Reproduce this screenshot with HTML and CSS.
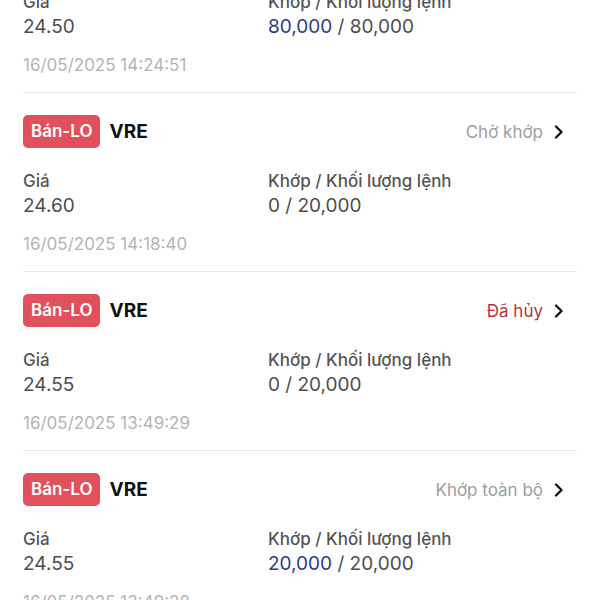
FILE: index.html
```html
<!DOCTYPE html>
<html>
<head>
    <link rel="stylesheet" href="styles.css">
</head>
<body>
    <div class="order-list">

        <div class="order">
            <div class="order-head">
                <span class="badge">Bán-LO</span>
                <span class="symbol">VRE</span>
                <span class="status">Khớp toàn bộ</span>
                <svg class="chevron" viewBox="0 0 10 14"><path d="M2 1.5 L7.5 7 L2 12.5"/></svg>
            </div>
            <div class="order-body">
                <div class="field">
                    <div class="label">Giá</div>
                    <div class="value">24.50</div>
                </div>
                <div class="field">
                    <div class="label">Khớp / Khối lượng lệnh</div>
                    <div class="value"><span class="matched">80,000</span> / 80,000</div>
                </div>
            </div>
            <div class="time">16/05/2025 14:24:51</div>
        </div>

        <div class="order">
            <div class="order-head">
                <span class="badge">Bán-LO</span>
                <span class="symbol">VRE</span>
                <span class="status">Chờ khớp</span>
                <svg class="chevron" viewBox="0 0 10 14"><path d="M2 1.5 L7.5 7 L2 12.5"/></svg>
            </div>
            <div class="order-body">
                <div class="field">
                    <div class="label">Giá</div>
                    <div class="value">24.60</div>
                </div>
                <div class="field">
                    <div class="label">Khớp / Khối lượng lệnh</div>
                    <div class="value">0 / 20,000</div>
                </div>
            </div>
            <div class="time">16/05/2025 14:18:40</div>
        </div>

        <div class="order">
            <div class="order-head">
                <span class="badge">Bán-LO</span>
                <span class="symbol">VRE</span>
                <span class="status cancelled">Đã hủy</span>
                <svg class="chevron" viewBox="0 0 10 14"><path d="M2 1.5 L7.5 7 L2 12.5"/></svg>
            </div>
            <div class="order-body">
                <div class="field">
                    <div class="label">Giá</div>
                    <div class="value">24.55</div>
                </div>
                <div class="field">
                    <div class="label">Khớp / Khối lượng lệnh</div>
                    <div class="value">0 / 20,000</div>
                </div>
            </div>
            <div class="time">16/05/2025 13:49:29</div>
        </div>

        <div class="order">
            <div class="order-head">
                <span class="badge">Bán-LO</span>
                <span class="symbol">VRE</span>
                <span class="status">Khớp toàn bộ</span>
                <svg class="chevron" viewBox="0 0 10 14"><path d="M2 1.5 L7.5 7 L2 12.5"/></svg>
            </div>
            <div class="order-body">
                <div class="field">
                    <div class="label">Giá</div>
                    <div class="value">24.55</div>
                </div>
                <div class="field">
                    <div class="label">Khớp / Khối lượng lệnh</div>
                    <div class="value"><span class="matched">20,000</span> / 20,000</div>
                </div>
            </div>
            <div class="time">16/05/2025 13:49:28</div>
        </div>

    </div>
</body>
</html>
```

FILE: styles.css
```css
body {
    margin: 0;
    background-color: #fff;
    font-family: Inter, "Noto Sans", sans-serif;
    overflow: hidden;
}

/* list of orders, scrolled a bit so the first one is cut off */
.order-list {
    margin-top: -86px;
    padding: 0 23px;
}

.order {
    padding: 22px 0 17px;
    border-bottom: 1px solid #e6e6e6;
}

.order-head {
    display: flex;
    align-items: center;
    height: 33px;
}

.badge {
    background-color: #e2505d;
    color: #fff;
    font-size: 17px;
    font-weight: 600;
    line-height: 33px;
    padding: 0 8px;
    border-radius: 5px;
}

.symbol {
    margin-left: 9px;
    font-size: 19px;
    font-weight: 700;
    color: #111;
}

.status {
    margin-left: auto;
    font-size: 17px;
    color: #9d9d9d;
}

.status.cancelled {
    color: #b3343f;
}

.chevron {
    width: 10px;
    height: 14px;
    margin-left: 11px;
    margin-right: 13px;
    fill: none;
    stroke: #111;
    stroke-width: 2.3;
    stroke-linecap: round;
    stroke-linejoin: round;
}

.order-body {
    display: grid;
    grid-template-columns: 245px 1fr;
    margin-top: 22px;
}

.label {
    font-size: 17px;
    font-weight: 500;
    line-height: 22px;
    color: #555;
}

.value {
    margin-top: 2px;
    font-size: 19px;
    line-height: 24px;
    color: #4d4d4d;
}

.matched {
    color: #2a3d85;
}

.time {
    margin-top: 16px;
    font-size: 17px;
    line-height: 20px;
    color: #b4b4b4;
}
```
